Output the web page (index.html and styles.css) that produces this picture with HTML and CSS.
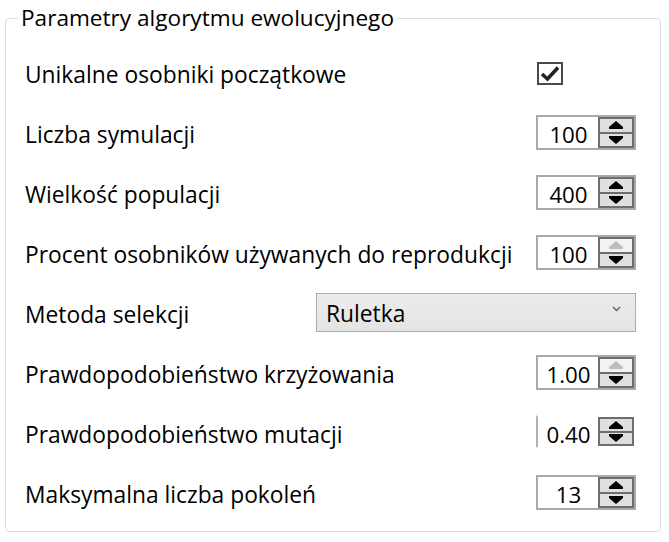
FILE: index.html
```html
<!DOCTYPE html>
<html lang="pl">
<head>
<meta charset="utf-8">
<title>Parametry algorytmu ewolucyjnego</title>
<link rel="stylesheet" href="styles.css">
</head>
<body>
<fieldset class="group">
  <legend class="group-title">Parametry algorytmu ewolucyjnego</legend>
  <div class="rows">
    <div class="row">
      <span class="label">Unikalne osobniki początkowe</span>
      <div class="ctl">
        <span class="checkbox"><svg width="20" height="17" viewBox="0 0 20 17"><path d="M2 9 L7.5 14 L18 2.5" fill="none" stroke="#222" stroke-width="3.6" stroke-linejoin="miter"/></svg></span>
      </div>
    </div>
    <div class="row">
      <span class="label">Liczba symulacji</span>
      <div class="ctl">
        <div class="num"><span class="num-value">100</span><span class="spin"><span class="spin-btn"><svg width="14" height="8" viewBox="0 0 14 8"><polygon points="7,0 14,6 14,8 0,8 0,6"/></svg></span><span class="spin-btn"><svg width="14" height="8" viewBox="0 0 14 8"><polygon points="0,0 14,0 14,2 7,8 0,2"/></svg></span></span></div>
      </div>
    </div>
    <div class="row">
      <span class="label">Wielkość populacji</span>
      <div class="ctl">
        <div class="num"><span class="num-value">400</span><span class="spin"><span class="spin-btn"><svg width="14" height="8" viewBox="0 0 14 8"><polygon points="7,0 14,6 14,8 0,8 0,6"/></svg></span><span class="spin-btn"><svg width="14" height="8" viewBox="0 0 14 8"><polygon points="0,0 14,0 14,2 7,8 0,2"/></svg></span></span></div>
      </div>
    </div>
    <div class="row">
      <span class="label">Procent osobników używanych do reprodukcji</span>
      <div class="ctl">
        <div class="num"><span class="num-value">100</span><span class="spin"><span class="spin-btn is-disabled"><svg width="14" height="8" viewBox="0 0 14 8"><polygon points="7,0 14,6 14,8 0,8 0,6"/></svg></span><span class="spin-btn"><svg width="14" height="8" viewBox="0 0 14 8"><polygon points="0,0 14,0 14,2 7,8 0,2"/></svg></span></span></div>
      </div>
    </div>
    <div class="row">
      <span class="label">Metoda selekcji</span>
      <div class="combo">
        <span class="combo-value">Ruletka</span>
        <svg class="combo-arrow" width="9" height="6" viewBox="0 0 9 6"><path d="M1 1 L4.5 4.5 L8 1" fill="none" stroke="#606060" stroke-width="1.4"/></svg>
      </div>
    </div>
    <div class="row">
      <span class="label">Prawdopodobieństwo krzyżowania</span>
      <div class="ctl">
        <div class="num"><span class="num-value">1.00</span><span class="spin"><span class="spin-btn is-disabled"><svg width="14" height="8" viewBox="0 0 14 8"><polygon points="7,0 14,6 14,8 0,8 0,6"/></svg></span><span class="spin-btn"><svg width="14" height="8" viewBox="0 0 14 8"><polygon points="0,0 14,0 14,2 7,8 0,2"/></svg></span></span></div>
      </div>
    </div>
    <div class="row">
      <span class="label">Prawdopodobieństwo mutacji</span>
      <div class="ctl">
        <div class="num num-glitch"><span class="num-value">0.40</span><span class="spin"><span class="spin-btn"><svg width="14" height="8" viewBox="0 0 14 8"><polygon points="7,0 14,6 14,8 0,8 0,6"/></svg></span><span class="spin-btn"><svg width="14" height="8" viewBox="0 0 14 8"><polygon points="0,0 14,0 14,2 7,8 0,2"/></svg></span></span></div>
      </div>
    </div>
    <div class="row">
      <span class="label">Maksymalna liczba pokoleń</span>
      <div class="ctl">
        <div class="num"><span class="num-value">13</span><span class="spin"><span class="spin-btn"><svg width="14" height="8" viewBox="0 0 14 8"><polygon points="7,0 14,6 14,8 0,8 0,6"/></svg></span><span class="spin-btn"><svg width="14" height="8" viewBox="0 0 14 8"><polygon points="0,0 14,0 14,2 7,8 0,2"/></svg></span></span></div>
      </div>
    </div>
  </div>
</fieldset>
</body>
</html>
```

FILE: styles.css
```css
html, body {
  margin: 0;
  padding: 0;
  background: #ffffff;
}

body {
  font-family: "Open Sans", "Noto Sans", "Liberation Sans", sans-serif;
  font-size: 22.8px;
  color: #000000;
}

.group {
  margin: 3px 8px 0 5px;
  padding: 11px 24px 7px 19px;
  border: 1px solid #d5dfe5;
  border-radius: 4px;
  min-width: 0;
}

.group-title {
  margin-left: -7px;
  padding: 0 3px;
  line-height: 30px;
  font-size: 22.6px;
}

.rows {
  display: flex;
  flex-direction: column;
}

.row {
  height: 60px;
  display: flex;
  align-items: center;
  justify-content: space-between;
}

.label {
  white-space: nowrap;
}

.ctl {
  width: 100px;
  display: flex;
  align-items: center;
}

.checkbox {
  width: 26px;
  height: 23px;
  box-sizing: border-box;
  border: 2px solid #4a4a4a;
  margin-left: 1px;
  margin-top: -2px;
  display: flex;
  align-items: center;
  justify-content: center;
  background: #ffffff;
}

.num {
  width: 100px;
  height: 35px;
  box-sizing: border-box;
  border: 2px solid #a9a9a9;
  display: flex;
  margin-top: -3px;
  background: #ffffff;
}

.num-value {
  flex: 1;
  text-align: center;
  line-height: 32px;
  padding-top: 2px;
  padding-left: 1px;
  font-size: 22.3px;
}

.spin {
  width: 36px;
  box-sizing: border-box;
  border: 2px solid #6e6e6e;
  background: #6e6e6e;
  display: flex;
  flex-direction: column;
  gap: 2px;
}

.spin-btn {
  flex: 1;
  background: #dfdfdf;
  display: flex;
  align-items: center;
  justify-content: center;
}

.spin-btn svg {
  fill: #000000;
}

.spin-btn.is-disabled {
  background: #f3f3f3;
}

.spin-btn.is-disabled svg {
  fill: #bdbdbd;
}

.num-glitch {
  border-top-color: transparent;
  border-bottom-color: transparent;
  border-right-color: transparent;
  border-left-color: #b0b0b0;
  margin-top: -5px;
  height: 33px;
}

.combo {
  width: 320px;
  height: 39px;
  box-sizing: border-box;
  border: 1px solid #adadad;
  background: linear-gradient(#ececec, #e4e4e4);
  display: flex;
  align-items: center;
  justify-content: space-between;
  padding: 0 14px 0 9px;
  margin-top: -3px;
}

.combo-value {
  padding-top: 2px;
}

.combo-arrow {
  margin-top: -8px;
}
```
